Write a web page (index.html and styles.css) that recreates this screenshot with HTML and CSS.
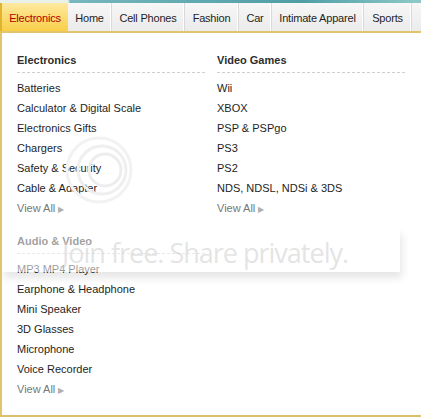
FILE: index.html
```html
<!DOCTYPE html>
<html lang="en">
<head>
    <meta charset="UTF-8">
    <title>Electronics Menu</title>
    <link rel="stylesheet" href="styles.css">
</head>
<body>
    <!-- Top strip -->
    <div class="topstrip"></div>

    <!-- Main navigation -->
    <ul class="nav">
        <li class="active"><a href="#">Electronics</a></li>
        <li><a href="#">Home</a></li>
        <li><a href="#">Cell Phones</a></li>
        <li><a href="#">Fashion</a></li>
        <li><a href="#">Car</a></li>
        <li><a href="#">Intimate Apparel</a></li>
        <li><a href="#">Sports</a></li>
        <li class="filler"></li>
    </ul>

    <!-- Dropdown panel -->
    <div class="dropdown">
        <div class="menu-col">
            <div class="section">
                <h4>Electronics</h4>
                <div class="dash"></div>
                <a href="#">Batteries</a>
                <a href="#">Calculator &amp; Digital Scale</a>
                <a href="#">Electronics Gifts</a>
                <a href="#">Chargers</a>
                <a href="#">Safety &amp; Security</a>
                <a href="#">Cable &amp; Adapter</a>
                <a href="#" class="view-all">View All <span class="arrow">&#9654;</span></a>
            </div>
            <div class="section">
                <h4>Audio &amp; Video</h4>
                <div class="dash"></div>
                <a href="#">MP3 MP4 Player</a>
                <a href="#">Earphone &amp; Headphone</a>
                <a href="#">Mini Speaker</a>
                <a href="#">3D Glasses</a>
                <a href="#">Microphone</a>
                <a href="#">Voice Recorder</a>
                <a href="#" class="view-all">View All <span class="arrow">&#9654;</span></a>
            </div>
        </div>
        <div class="menu-col">
            <div class="section">
                <h4>Video Games</h4>
                <div class="dash"></div>
                <a href="#">Wii</a>
                <a href="#">XBOX</a>
                <a href="#">PSP &amp; PSPgo</a>
                <a href="#">PS3</a>
                <a href="#">PS2</a>
                <a href="#">NDS, NDSL, NDSi &amp; 3DS</a>
                <a href="#" class="view-all">View All <span class="arrow">&#9654;</span></a>
            </div>
        </div>

        <!-- watermark overlay -->
        <div class="wm-logo">
            <svg width="70" height="70" viewBox="0 0 70 70">
                <circle cx="35" cy="35" r="32" fill="none" stroke="#f2f2f2" stroke-width="3"/>
                <circle cx="38" cy="35" r="24" fill="none" stroke="#efefef" stroke-width="3"/>
                <circle cx="41" cy="35" r="16" fill="none" stroke="#ededed" stroke-width="3"/>
            </svg>
        </div>
        <div class="wm-band">Join free. Share privately.</div>
    </div>
</body>
</html>
```

FILE: styles.css
```css
/* General styling */
body {
    margin: 0;
    padding: 0;
    background-color: #fdfdf8;
    font-family: "Liberation Sans", Arial, sans-serif;
    font-size: 11px;
    color: #333;
}
a {
    text-decoration: none;
    color: inherit;
}
/* Top strip */
.topstrip {
    height: 3px;
    background: linear-gradient(to right, #e9f1ea 0, #e9f1ea 68px, #78b7bd 70px, #4f9ea6 300px, #8fcac8 421px);
}
/* Navigation */
.nav {
    display: flex;
    list-style: none;
    margin: 0;
    padding: 0;
    height: 28px;
    background: linear-gradient(#f7f7f7, #ebebeb);
    border-bottom: 2px solid #e2c46c;
    overflow: hidden;
}
.nav li {
    flex-shrink: 0;
    text-align: center;
    border-right: 1px solid #d9d9d9;
    box-shadow: inset -1px 0 0 #ffffff;
}
.nav li:nth-child(2) { width: 43px; }
.nav li:nth-child(3) { width: 72px; }
.nav li:nth-child(4) { width: 53px; }
.nav li:nth-child(5) { width: 32px; }
.nav li:nth-child(6) { width: 91px; }
.nav li:nth-child(7) { width: 47px; }
.nav li.filler {
    flex: 1;
    border-right: none;
    box-shadow: none;
}
.nav a {
    display: block;
    white-space: nowrap;
    padding-top: 3px;
    line-height: 25px;
    letter-spacing: -0.2px;
    color: #1e1e1e;
}
.nav li.active {
    width: 66px;
    background: linear-gradient(#fde9a0, #f9cf48);
    border-left: 2px solid #e0b52d;
    border-right: none;
    box-shadow: none;
}
.nav li.active a {
    color: #b00000;
}
/* Dropdown */
.dropdown {
    position: relative;
    display: flex;
    gap: 10px;
    background-color: #ffffff;
    border-left: 2px solid #e2c46c;
    border-bottom: 2px solid #dcc06a;
    padding: 17px 0 14px 15px;
    overflow: hidden;
}
.menu-col {
    width: 190px;
}
.menu-col:last-of-type {
    width: 191px;
}
.section {
    display: flex;
    flex-direction: column;
}
.section + .section {
    margin-top: 11px;
}
.section h4 {
    margin: 0 0 2px;
    line-height: 20px;
    font-size: 11px;
    font-weight: bold;
    color: #2e2e2e;
}
.dash {
    height: 1px;
    margin-bottom: 5px;
    background: repeating-linear-gradient(to right, #cfcfcf 0 3px, transparent 3px 5px);
}
.section a {
    line-height: 20px;
    color: #1e1e1e;
}
.section a.view-all {
    color: #777;
}
.arrow {
    font-size: 8px;
    color: #b0b0b0;
}
/* Watermark overlay */
.wm-logo {
    position: absolute;
    left: 62px;
    top: 102px;
    pointer-events: none;
}
.wm-band {
    position: absolute;
    left: 0;
    top: 195px;
    width: 398px;
    height: 44px;
    background: rgba(255, 255, 255, 0.55);
    box-shadow: 2px 6px 8px rgba(0, 0, 0, 0.10);
    font-family: "Open Sans", sans-serif;
    font-size: 27px;
    line-height: 50px;
    white-space: nowrap;
    padding-left: 60px;
    box-sizing: border-box;
    color: rgba(205, 205, 205, 0.55);
    letter-spacing: -1px;
    pointer-events: none;
}
```
